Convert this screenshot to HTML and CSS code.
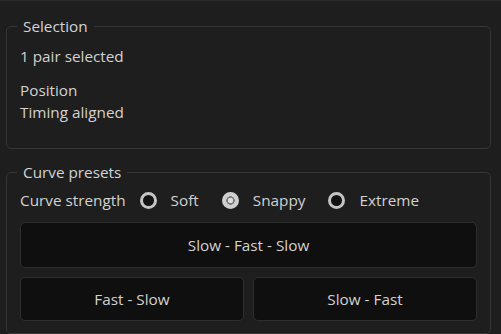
FILE: index.html
```html
<!DOCTYPE html>
<html lang="en">
<head>
  <meta charset="UTF-8">
  <title>Curve presets</title>
  <link rel="stylesheet" href="styles.css">
</head>
<body>
<div class="panel">
  <fieldset class="group selection">
    <legend>Selection</legend>
    <div class="line">1 pair selected</div>
    <div class="info">
      <div class="line">Position</div>
      <div class="line">Timing aligned</div>
    </div>
  </fieldset>
  <fieldset class="group presets">
    <legend>Curve presets</legend>
    <div class="strength">
      <span class="label">Curve strength</span>
      <label class="radio"><input type="radio" name="strength" value="soft"><span class="dot"></span>Soft</label>
      <label class="radio"><input type="radio" name="strength" value="snappy" checked><span class="dot"></span>Snappy</label>
      <label class="radio"><input type="radio" name="strength" value="extreme"><span class="dot"></span>Extreme</label>
    </div>
    <button type="button" class="btn wide">Slow - Fast - Slow</button>
    <div class="pair">
      <button type="button" class="btn">Fast - Slow</button>
      <button type="button" class="btn">Slow - Fast</button>
    </div>
  </fieldset>
</div>
</body>
</html>
```

FILE: styles.css
```css
html, body { margin: 0; padding: 0; background: #1e1e1e; }
body { font-family: "Open Sans", "Noto Sans", Arial, sans-serif; font-size: 15.3px; color: #d2d2d2; border-top: 1px solid #2a2a2a; }
.panel { padding: 14px 10px 0 6px; }
.group { margin: 0; border: 1px solid #363636; border-radius: 5px; padding: 0 13px 0 13px; min-width: 0; }
.group legend { margin-left: -3px; padding: 0 6px; font-size: 15.3px; line-height: 22px; color: #d0d4d8; }
.line { line-height: 22px; }
.selection { padding-top: 8px; padding-bottom: 25px; }
.info { margin-top: 12px; }
.presets { margin-top: 12px; padding-top: 6px; padding-bottom: 12px; }
.strength { display: flex; align-items: center; line-height: 22px; }
.label { margin-right: 14px; }
.radio { display: flex; align-items: center; margin-right: 23px; cursor: pointer; }
.radio input { display: none; }
.dot { width: 11px; height: 11px; border: 3px solid #c4c4c4; border-radius: 50%; background: #121212; margin-right: 14px; }
.radio input:checked + .dot { background: radial-gradient(circle, #dcdcdc 0 2.5px, #7a7a7a 3px 4px, #cfcfcf 4.5px); border-color: #cfcfcf; }
.btn { display: block; width: 100%; background: #0f0f0f; color: #d2d2d2; border: 1px solid #2e2e2e; border-radius: 5px; font-family: inherit; font-size: 15.3px; cursor: pointer; }
.btn:hover { background: #161616; }
.wide { margin-top: 11px; height: 46px; }
.pair { display: flex; gap: 9px; margin-top: 9px; }
.pair .btn { height: 44px; }
```
